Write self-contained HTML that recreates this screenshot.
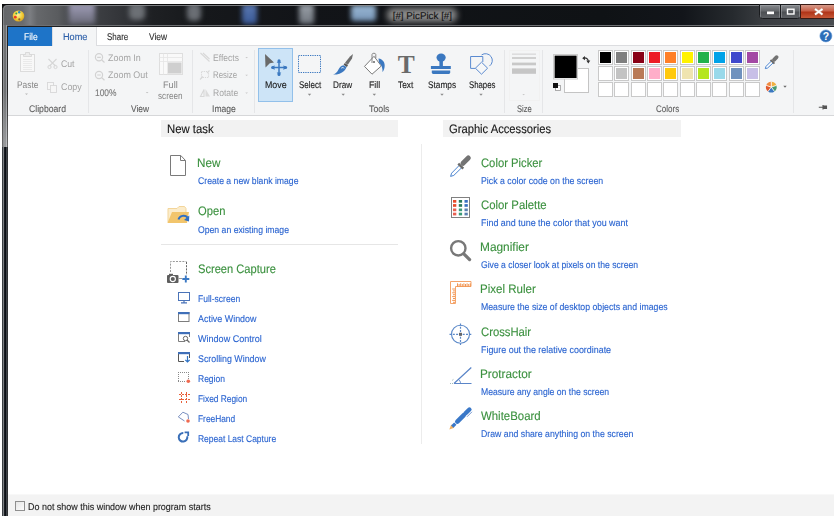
<!DOCTYPE html>
<html><head><meta charset="utf-8">
<style>
*{margin:0;padding:0;box-sizing:border-box}
html,body{width:834px;height:516px;overflow:hidden;background:#fff;font-family:"Liberation Sans",sans-serif}
.a{position:absolute;white-space:nowrap}
#frame{position:absolute;left:2px;top:4px;width:840px;height:520px;background:#0e0f10}
#hl{position:absolute;left:3px;top:5px;width:840px;height:520px;border-radius:5px 0 0 0;border-left:1px solid #8a8c8f;border-top:1px solid #8a8c8f;opacity:.8}
#title{position:absolute;left:3px;top:5px;width:840px;height:20px;border-radius:4px 0 0 0;overflow:hidden;
 background:linear-gradient(90deg,#65676a 0px,#6a6c6f 20px,#7c7e82 27px,#66686b 34px,#5a5c5f 55px,#4c4e52 64px,#3c3e42 95px,#303236 125px,#1e2023 150px,#16181b 200px,#121418 300px,#0f1215 600px,#12151a 680px,#262a2e 730px,#3a3d41 760px,#4a4d51 834px)}
#title div{position:absolute;top:0;height:20px;filter:blur(2.5px)}
#tline{position:absolute;left:3px;top:4px;width:840px;height:1px;background:#0a0a0b}
#tbot{position:absolute;left:7px;top:25px;width:840px;height:1px;background:#6e7073}
#lframe{position:absolute;left:2px;top:147px;width:6px;height:380px;background:linear-gradient(90deg,#303438 0px,#50555a 1.5px,#14181e 2.6px,#0a0d12 3.4px,#14181e 4px,#555a5f 4.8px,#2a2b2c 5.6px,#222324 6px)}
#lframe2{position:absolute;left:2px;top:8px;width:6px;height:139px;background:linear-gradient(rgba(255,255,255,0) 0,rgba(255,255,255,0) 60%,rgba(255,255,255,.3) 100%),linear-gradient(90deg,#2a2a2a 0px,#2a2a2a 0.8px,#a0a2a5 1.5px,#6c6e70 2.6px,#6a6c6e 3.4px,#9a9ca0 4.5px,#252525 5.3px,#252525 6px)}
#client{position:absolute;left:8px;top:26px;width:830px;height:500px;background:#fff;border-top:1px solid #1e1f21}
.tabrow{position:absolute;left:8px;top:27px;width:826px;height:18px;background:#fff}
.ribbon{position:absolute;left:8px;top:45px;width:826px;height:71px;background:#f4f5f6;border-top:1px solid #dcdde0;border-bottom:1px solid #d6d7d9}
.sep{position:absolute;top:50px;width:1px;height:62px;background:#e1e2e4}
.rt{font-size:9px;color:#444}
.dim{color:#a8a8a8}
.glab{font-size:9px;color:#555}
.hdr{position:absolute;height:17px;background:#f2f2f2;font-size:11.3px;color:#1a1a1a;padding-left:6px;line-height:17px}
.big{font-size:11.4px;color:#2e8b2e}
.desc{font-size:8.7px;color:#2b6fd0}
.cap{font-size:8.7px;color:#2b6fd0}
#bottom{position:absolute;left:8px;top:494px;width:826px;height:22px;background:linear-gradient(#f8f8f8 0,#f8f8f8 1px,#f3f3f3 1px)}
</style></head><body>
<div id="frame"></div>
<div id="lframe"></div>
<div id="lframe2"></div>
<div id="title">
<div style="left:66px;width:26px;top:-2px;height:21px;background:linear-gradient(#a29fba,#7a7a8c 70%,#6a6a78)"></div>
<div style="left:126px;width:16px;top:-2px;height:17px;border-radius:5px;background:#6c7075"></div>
<div style="left:184px;width:14px;top:-2px;height:18px;border-radius:5px;background:#6a6e74"></div>
<div style="left:239px;width:15px;top:-1px;height:20px;border-radius:3px;background:linear-gradient(#5a78b0,#3a5a98)"></div>
<div style="left:296px;width:15px;top:-1px;height:20px;border-radius:3px;background:linear-gradient(#9aa0a8,#70767e)"></div>
<div style="left:348px;width:25px;top:0px;height:16px;border-radius:3px;background:linear-gradient(#9ab8d4,#7896b8)"></div>
<div style="left:384px;width:70px;top:3px;height:14px;border-radius:6px;background:#8a8a8a;filter:blur(3px)"></div>
</div>
<div id="tline"></div>
<div id="hl"></div>
<div id="tbot"></div>
<div class="a" style="left:8px;top:5px;width:830px;height:1px;background:rgba(140,142,146,.35)"></div>
<div id="client"></div>

<svg class="a" style="left:0;top:0" width="834" height="30" viewBox="0 0 834 30">
<defs><radialGradient id="pal" cx="0.45" cy="0.4" r="0.6"><stop offset="0" stop-color="#fff3a0"/><stop offset="0.6" stop-color="#f2cf3a"/><stop offset="1" stop-color="#d9a520"/></radialGradient>
<linearGradient id="btn" x1="0" y1="0" x2="0" y2="1"><stop offset="0" stop-color="#8a8d91"/><stop offset="0.45" stop-color="#64676b"/><stop offset="0.55" stop-color="#4c4f53"/><stop offset="1" stop-color="#5e6165"/></linearGradient>
<linearGradient id="cls" x1="0" y1="0" x2="0" y2="1"><stop offset="0" stop-color="#d8a090"/><stop offset="0.45" stop-color="#c86048"/><stop offset="0.55" stop-color="#b03418"/><stop offset="1" stop-color="#c85a38"/></linearGradient></defs>
<ellipse cx="18.5" cy="16" rx="5.8" ry="5.6" fill="url(#pal)"/>
<circle cx="15.3" cy="17.2" r="1.4" fill="#e83a2a"/>
<circle cx="16.3" cy="13.4" r="1" fill="#3aa040"/>
<circle cx="19.2" cy="12.2" r="1.2" fill="#2a8ac0"/>
<circle cx="19.3" cy="19.3" r="1.1" fill="#8a6030"/>
<path d="M759.5,4.5H800.5V15.5Q800.5,18.5 797.5,18.5H762.5Q759.5,18.5 759.5,15.5Z" fill="url(#btn)" stroke="#1a1c1f" stroke-width="1"/>
<path d="M780.5,4.5V18.5" stroke="#1a1c1f" stroke-width="1"/>
<path d="M760.5,17.5V5.5H779.5V17.5M781.5,17.5V5.5H799.5V17.5" stroke="#b0b3b8" stroke-width="0.8" fill="none" opacity="0.55"/>
<path d="M800.5,4.5H840V18.5H800.5Z" fill="url(#cls)" stroke="#3a1a14" stroke-width="1"/>
<rect x="767" y="11.5" width="7" height="2.7" fill="#fff"/>
<rect x="787.5" y="9.2" width="6.5" height="4.8" fill="none" stroke="#fff" stroke-width="1.4"/>
<path d="M815,9L822.5,14.5M822.5,9L815,14.5" stroke="#bfe8e0" stroke-width="3" opacity=".35"/><path d="M815,9L822.5,14.5M822.5,9L815,14.5" stroke="#fff" stroke-width="1.7"/>
</svg>

<div class="tabrow"></div>


<div class="ribbon"></div>
<div class="a" style="left:8px;top:27px;width:44px;height:19px;background:#1e74c8"></div>
<div class="a" style="left:52px;top:27px;width:45px;height:19px;background:#f4f5f6;border-left:1px solid #dcdde0;border-right:1px solid #dcdde0"></div>
<div id="ribbon">
<div class="a" style="left:88px;top:50px;width:1px;height:63px;background:#e5e6e8"></div>
<div class="a" style="left:192px;top:50px;width:1px;height:63px;background:#e5e6e8"></div>
<div class="a" style="left:254px;top:50px;width:1px;height:63px;background:#e5e6e8"></div>
<div class="a" style="left:504px;top:50px;width:1px;height:63px;background:#e5e6e8"></div>
<div class="a" style="left:542px;top:50px;width:1px;height:63px;background:#e5e6e8"></div>
<div class="a" style="left:793px;top:50px;width:1px;height:63px;background:#e5e6e8"></div>
<div class="a" style="left:258px;top:48px;width:35px;height:54px;background:#cde4f7;border:1px solid #92c0ea"></div>
<div class="a" style="left:598px;top:50px;width:15px;height:15px;border:1px solid #c9c9c9;background:#fff"><div style="margin:1px;width:11px;height:11px;background:#000000"></div></div>
<div class="a" style="left:614px;top:50px;width:15px;height:15px;border:1px solid #c9c9c9;background:#fff"><div style="margin:1px;width:11px;height:11px;background:#7f7f7f"></div></div>
<div class="a" style="left:631px;top:50px;width:15px;height:15px;border:1px solid #c9c9c9;background:#fff"><div style="margin:1px;width:11px;height:11px;background:#880015"></div></div>
<div class="a" style="left:647px;top:50px;width:15px;height:15px;border:1px solid #c9c9c9;background:#fff"><div style="margin:1px;width:11px;height:11px;background:#ed1c24"></div></div>
<div class="a" style="left:663px;top:50px;width:15px;height:15px;border:1px solid #c9c9c9;background:#fff"><div style="margin:1px;width:11px;height:11px;background:#ff7f27"></div></div>
<div class="a" style="left:680px;top:50px;width:15px;height:15px;border:1px solid #c9c9c9;background:#fff"><div style="margin:1px;width:11px;height:11px;background:#fff200"></div></div>
<div class="a" style="left:696px;top:50px;width:15px;height:15px;border:1px solid #c9c9c9;background:#fff"><div style="margin:1px;width:11px;height:11px;background:#22b14c"></div></div>
<div class="a" style="left:712px;top:50px;width:15px;height:15px;border:1px solid #c9c9c9;background:#fff"><div style="margin:1px;width:11px;height:11px;background:#00a2e8"></div></div>
<div class="a" style="left:729px;top:50px;width:15px;height:15px;border:1px solid #c9c9c9;background:#fff"><div style="margin:1px;width:11px;height:11px;background:#3f48cc"></div></div>
<div class="a" style="left:745px;top:50px;width:15px;height:15px;border:1px solid #c9c9c9;background:#fff"><div style="margin:1px;width:11px;height:11px;background:#a349a4"></div></div>
<div class="a" style="left:598px;top:66px;width:15px;height:15px;border:1px solid #c9c9c9;background:#fff"><div style="margin:1px;width:11px;height:11px;background:#ffffff"></div></div>
<div class="a" style="left:614px;top:66px;width:15px;height:15px;border:1px solid #c9c9c9;background:#fff"><div style="margin:1px;width:11px;height:11px;background:#c3c3c3"></div></div>
<div class="a" style="left:631px;top:66px;width:15px;height:15px;border:1px solid #c9c9c9;background:#fff"><div style="margin:1px;width:11px;height:11px;background:#b97a57"></div></div>
<div class="a" style="left:647px;top:66px;width:15px;height:15px;border:1px solid #c9c9c9;background:#fff"><div style="margin:1px;width:11px;height:11px;background:#ffaec9"></div></div>
<div class="a" style="left:663px;top:66px;width:15px;height:15px;border:1px solid #c9c9c9;background:#fff"><div style="margin:1px;width:11px;height:11px;background:#ffc90e"></div></div>
<div class="a" style="left:680px;top:66px;width:15px;height:15px;border:1px solid #c9c9c9;background:#fff"><div style="margin:1px;width:11px;height:11px;background:#efe4b0"></div></div>
<div class="a" style="left:696px;top:66px;width:15px;height:15px;border:1px solid #c9c9c9;background:#fff"><div style="margin:1px;width:11px;height:11px;background:#b5e61d"></div></div>
<div class="a" style="left:712px;top:66px;width:15px;height:15px;border:1px solid #c9c9c9;background:#fff"><div style="margin:1px;width:11px;height:11px;background:#99d9ea"></div></div>
<div class="a" style="left:729px;top:66px;width:15px;height:15px;border:1px solid #c9c9c9;background:#fff"><div style="margin:1px;width:11px;height:11px;background:#7092be"></div></div>
<div class="a" style="left:745px;top:66px;width:15px;height:15px;border:1px solid #c9c9c9;background:#fff"><div style="margin:1px;width:11px;height:11px;background:#c8bfe7"></div></div>
<div class="a" style="left:598px;top:82px;width:15px;height:15px;border:1px solid #c9c9c9;background:#fff"><div style="margin:1px;width:11px;height:11px;background:#ffffff"></div></div>
<div class="a" style="left:614px;top:82px;width:15px;height:15px;border:1px solid #c9c9c9;background:#fff"><div style="margin:1px;width:11px;height:11px;background:#ffffff"></div></div>
<div class="a" style="left:631px;top:82px;width:15px;height:15px;border:1px solid #c9c9c9;background:#fff"><div style="margin:1px;width:11px;height:11px;background:#ffffff"></div></div>
<div class="a" style="left:647px;top:82px;width:15px;height:15px;border:1px solid #c9c9c9;background:#fff"><div style="margin:1px;width:11px;height:11px;background:#ffffff"></div></div>
<div class="a" style="left:663px;top:82px;width:15px;height:15px;border:1px solid #c9c9c9;background:#fff"><div style="margin:1px;width:11px;height:11px;background:#ffffff"></div></div>
<div class="a" style="left:680px;top:82px;width:15px;height:15px;border:1px solid #c9c9c9;background:#fff"><div style="margin:1px;width:11px;height:11px;background:#ffffff"></div></div>
<div class="a" style="left:696px;top:82px;width:15px;height:15px;border:1px solid #c9c9c9;background:#fff"><div style="margin:1px;width:11px;height:11px;background:#ffffff"></div></div>
<div class="a" style="left:712px;top:82px;width:15px;height:15px;border:1px solid #c9c9c9;background:#fff"><div style="margin:1px;width:11px;height:11px;background:#ffffff"></div></div>
<div class="a" style="left:729px;top:82px;width:15px;height:15px;border:1px solid #c9c9c9;background:#fff"><div style="margin:1px;width:11px;height:11px;background:#ffffff"></div></div>
<div class="a" style="left:745px;top:82px;width:15px;height:15px;border:1px solid #c9c9c9;background:#fff"><div style="margin:1px;width:11px;height:11px;background:#ffffff"></div></div>
<svg class="a" style="left:0;top:0" width="834" height="516" viewBox="0 0 834 516">
<!-- Paste -->
<rect x="20.5" y="54.5" width="14" height="17" fill="#f8f8f8" stroke="#dcdcdc"/>
<path d="M23.5,56.5V54.5H25.5V52.5H29.5V54.5H31.5V56.5Z" fill="#ececec" stroke="#d4d4d4" stroke-width="0.8"/>
<path d="M23,59.5H32M23,61.5H32M23,63.5H32M23,65.5H32M23,67.5H32M23,69.5H32" stroke="#e6e6e6" stroke-width="0.8"/>
<path d="M25,93.5H28L26.5,95Z" fill="#b8b8b8"/>
<!-- Cut -->
<path d="M48.5,59L55.5,66M56.5,59L49.5,66" stroke="#d6d6d6" stroke-width="1.1"/>
<circle cx="49.5" cy="67" r="1.6" fill="none" stroke="#d6d6d6"/><circle cx="55.5" cy="67" r="1.6" fill="none" stroke="#d6d6d6"/>
<!-- Copy -->
<rect x="47.5" y="82.5" width="6" height="7" fill="#f6f6f6" stroke="#d8d8d8" stroke-width="0.9"/>
<rect x="50.5" y="85.5" width="6" height="7" fill="#f6f6f6" stroke="#d8d8d8" stroke-width="0.9"/>
<!-- Zoom in/out -->
<g fill="none" stroke="#d2d2d2" stroke-width="1.2">
<circle cx="99" cy="57.3" r="3.6"/><path d="M101.8,60L104.5,62.5M97.2,57.3H100.8"/>
<circle cx="99" cy="75" r="3.6"/><path d="M101.8,77.7L104.5,80.2M97.2,75H100.8"/>
</g>
<path d="M145.8,92H148.5L147.1,93.3Z" fill="#c0c0c0"/>
<!-- Full screen -->
<rect x="159.5" y="53.5" width="23" height="21" fill="#f9f9f9" stroke="#dedede"/>
<path d="M159.5,57.5H182.5M159.5,61.5H182.5M163.5,53.5V74.5M167.5,53.5V74.5" stroke="#e4e4e4" stroke-width="0.8"/>
<rect x="168" y="62.5" width="13.5" height="11" fill="#cfcfcf"/>
<!-- Effects/Resize/Rotate -->
<g stroke="#d8d8d8" stroke-width="1.1" fill="none">
<path d="M200.5,53L209.5,61.5M203,53L209.5,59"/>
<rect x="201.5" y="71.5" width="7" height="6" stroke-dasharray="1.2,1"/><path d="M200,79.5L203,76.5M209.5,70.5L207,73"/>
<path d="M200.5,96.5H204V89.5Z" fill="none"/><path d="M205.5,89V96.5H210Z" fill="#dcdcdc" stroke="none"/>
</g>
<g fill="#c8c8c8"><path d="M245.3,57H248L246.6,58.3Z"/><path d="M245.3,74.8H248L246.6,76.1Z"/><path d="M245.3,92.5H248L246.6,93.8Z"/></g>
<!-- Move -->
<path d="M265,54L274,62.5L269.8,63.2L265.5,67.5Z" fill="#6a6a6a"/>
<path d="M272.5,67.6H285.5M279,61V74.2" stroke="#3b78c0" stroke-width="1.5"/>
<circle cx="272.6" cy="67.6" r="1.5" fill="#3b78c0"/><circle cx="285.6" cy="67.6" r="1.5" fill="#3b78c0"/>
<circle cx="279" cy="60.8" r="1.5" fill="#3b78c0"/><circle cx="279" cy="74.4" r="1.5" fill="#3b78c0"/>
<path d="M271.5,67.6L274.5,65.3V69.9Z M286.5,67.6L283.5,65.3V69.9Z M279,59.8L276.7,62.8H281.3Z M279,75.4L276.7,72.4H281.3Z" fill="#3b78c0"/>
<!-- Select -->
<rect x="298.5" y="55.5" width="22" height="17" fill="none" stroke="#3b78c0" stroke-width="1" stroke-dasharray="1.3,1"/>
<!-- Draw -->
<path d="M353,54L352,58.5L347.8,64.8L345,62.8L350,56.5Z" fill="#6e6e6e"/>
<path d="M344.8,63L348,65.2L346.8,67L343.6,64.8Z" fill="#555"/>
<path d="M343.5,65.2C341,65.5 339.5,67.5 338.2,70C337,72.5 335,74 333,74.6C337,74.8 341.5,73.5 344,71C345.7,69.2 346.5,67.6 346.5,67Z" fill="#3b78c0"/>
<path d="M341.3,68.2C342,67.4 343.5,67.3 344,68.3" stroke="#fff" stroke-width="0.9" fill="none"/>
<!-- Fill -->
<path d="M374,56.3L381.3,66L372,74.2L364.5,66.4Z" fill="#fff" stroke="#7a7a7a" stroke-width="1"/>
<path d="M372,63V54.5C372,52.8 375.8,52.8 375.8,54.5V58" stroke="#7a7a7a" stroke-width="0.9" fill="none"/>
<circle cx="374" cy="62" r="1" fill="#666"/>
<path d="M378.5,58.5C383,59 385.5,63 384.5,67.5C384,70 383,71.5 382.5,72C382.8,69 381.8,65 379,62.5Z" fill="#3b78c0"/>
<!-- Text T -->
<text x="406.2" y="72.9" text-anchor="middle" font-family="Liberation Serif" font-weight="bold" font-size="25.5" fill="#6a6a6a">T</text>
<!-- Stamps -->
<ellipse cx="441.1" cy="57.6" rx="4.6" ry="4.1" fill="#3b78c0"/>
<rect x="439.4" y="60" width="3.5" height="6.5" fill="#3b78c0"/>
<rect x="430.9" y="66" width="19.9" height="3" fill="#3b78c0"/>
<path d="M431.8,70.4H450.2V72.6Q450.2,74 448.8,74H433.2Q431.8,74 431.8,72.6Z" fill="#3b78c0"/>
<!-- Shapes -->
<path d="M482.8,62V56.5H470.6V68.4H475.5" fill="none" stroke="#5a8ad0" stroke-width="1"/>
<path d="M481.6,54.9A6.8,6.8 0 0 1 489.4,66.1" fill="none" stroke="#5a8ad0" stroke-width="1"/>
<path d="M481.5,62.2L487.6,68.2L481.5,74.2L475.4,68.2Z" fill="#f6f7f8" stroke="#5a8ad0" stroke-width="1"/>
<!-- dropdown arrows -->
<g fill="#8a8a8a">
<path d="M307.8,93.7H311.2L309.5,95.7Z"/><path d="M341.5,93.7H344.9L343.2,95.7Z"/><path d="M372.6,93.7H376L374.3,95.7Z"/>
<path d="M440.3,93.7H443.7L442,95.7Z"/><path d="M479.3,93.7H482.7L481,95.7Z"/>
</g>
<path d="M522.3,94H525L523.6,95.2Z" fill="#c8c8c8"/>
<!-- Size -->
<rect x="509.5" y="50.5" width="30" height="50" fill="none" stroke="#efefef" stroke-width="1" opacity=".6"/>
<rect x="512" y="53.5" width="24" height="1.3" fill="#d8d8d8"/>
<rect x="512" y="57.1" width="24" height="1.8" fill="#cdcdcd"/>
<rect x="512" y="62.6" width="24" height="2.7" fill="#c8c8c8"/>
<rect x="512" y="68.4" width="24" height="5.4" fill="#c6c6c6"/>
<!-- Colors -->
<rect x="564.5" y="68.5" width="24" height="24" fill="#fff" stroke="#c4c4c4"/>
<rect x="553.5" y="54.5" width="24" height="24.5" fill="#fff" stroke="#cdcdcd"/>
<rect x="554.6" y="55.6" width="22" height="22.4" fill="#000"/>
<path d="M583.5,58C586.5,57.5 588.5,59.2 588.3,61.8" fill="none" stroke="#333" stroke-width="1.1"/>
<path d="M582.2,58.2L585,56V60.2Z M588.3,63.4L586.3,60.6H590.3Z" fill="#333"/>
<rect x="555.5" y="85.5" width="5" height="5" fill="#fff" stroke="#999" stroke-width="0.8"/>
<rect x="553" y="83" width="5" height="5" fill="#111"/>
<!-- eyedropper -->
<path d="M765.3,68.6L766,66.4L771.6,60.8L773.4,62.6L767.6,68Z" fill="#fff" stroke="#4a84d0" stroke-width="1"/>
<path d="M770.6,59.8L774.4,63.6" stroke="#6a6a6a" stroke-width="1.9"/>
<path d="M774,59.8L776.6,57.2" stroke="#737373" stroke-width="3.8" stroke-linecap="round"/>
<!-- color wheel -->
<g transform="translate(771.3,87.1)">
<path d="M0,0L0,-5.4A5.4,5.4 0 0 1 5.1,-1.7Z" fill="#f0b040"/>
<path d="M0,0L5.1,-1.7A5.4,5.4 0 0 1 3.2,4.3Z" fill="#4a9a70"/>
<path d="M0,0L3.2,4.3A5.4,5.4 0 0 1 -3.2,4.3Z" fill="#3a78c0"/>
<path d="M0,0L-3.2,4.3A5.4,5.4 0 0 1 -5.1,-1.7Z" fill="#e05a30"/>
<path d="M0,0L-5.1,-1.7A5.4,5.4 0 0 1 0,-5.4Z" fill="#f08a40"/>
<path d="M0,0V-5.4M0,0L5.1,-1.7M0,0L3.2,4.3M0,0L-3.2,4.3M0,0L-5.1,-1.7" stroke="#fff" stroke-width="0.8"/>
</g>
<path d="M783.3,85.8H786.7L785,87.8Z" fill="#666"/>
<!-- pin -->
<path d="M818.8,107.3H823M823,105V109.5M823,106H826.5V108.5H823" stroke="#555" stroke-width="1.1" fill="#555"/>
<!-- help -->
<circle cx="825.9" cy="35.9" r="6" fill="#2c6db8"/>
<circle cx="825.9" cy="35.9" r="6" fill="none" stroke="#5a90d0" stroke-width="0.6"/>
<text x="826" y="40" text-anchor="middle" font-family="Liberation Sans" font-weight="bold" font-size="10.5" fill="#fff">?</text>
</svg>

</div>

<div id="content">
<svg class="a" style="left:0;top:0" width="834" height="516" viewBox="0 0 834 516">
<!-- New doc -->
<path d="M170.5,155.5H180.8L185.5,160.5V175.5H170.5Z" fill="#fff" stroke="#7a7a7a" stroke-width="1"/>
<path d="M180.5,155.5V160.5H185.5" fill="none" stroke="#7a7a7a" stroke-width="1"/>
<!-- Open folder -->
<path d="M168,208.5H177L179,206.5H184.5L186,208.5V222.5H168Z" fill="#fbeccb" stroke="#f3d59a" stroke-width="1"/>
<path d="M172,212H189L187,223H167.5Z" fill="#f2c56c"/>
<path d="M178.5,219.5C179.5,215.5 185,214.5 187.5,217.5" fill="none" stroke="#2f6fc4" stroke-width="2"/>
<path d="M189.3,215.5L189,221.5L184,220Z" fill="#2f6fc4"/>
<!-- Screen capture -->
<path d="M170.5,272V261.5H186.5" fill="none" stroke="#9a9a9a" stroke-width="1" stroke-dasharray="2,1.2"/><path d="M186.5,262V275" fill="none" stroke="#666" stroke-width="1" stroke-dasharray="2,1.2"/>
<rect x="167" y="275" width="11.5" height="8" rx="1" fill="#5e5e5e"/>
<rect x="169" y="273.8" width="4" height="2" fill="#5e5e5e"/>
<circle cx="172.8" cy="279" r="2.6" fill="none" stroke="#fff" stroke-width="1.1"/>
<path d="M178.5,278.5H182" stroke="#999" stroke-width="1"/>
<path d="M185.8,275.5V282.5M182.3,279H189.3" stroke="#3a78c4" stroke-width="1.9"/>
<!-- list icons -->
<g stroke-width="1" fill="none">
<rect x="178.5" y="292.5" width="11" height="8" stroke="#4a73b8"/>
<path d="M184,300.5V302.5M181,302.8H187" stroke="#4a73b8" stroke-width="1.2"/>
<rect x="178.5" y="312.5" width="10.5" height="9" stroke="#7d7d7d"/>
<rect x="178" y="312" width="11.5" height="2.2" fill="#3f6fb8" stroke="none"/>
<path d="M178.5,332.5V341.5H185M189.5,337V332.5" stroke="#7d7d7d"/>
<rect x="178" y="332" width="12" height="2.2" fill="#3f6fb8" stroke="none"/>
<circle cx="185.5" cy="338.5" r="2.2" stroke="#666"/>
<path d="M187,340L189.5,342.5" stroke="#666" stroke-width="1.3"/>
<path d="M178.5,352.5V361.5H184M189.5,358V352.5" stroke="#555"/>
<rect x="178" y="352" width="12" height="2.2" fill="#3f6fb8" stroke="none"/>
<path d="M187.5,356V362M185.3,359.8L187.5,362L189.7,359.8" stroke="#2f72c4" stroke-width="1.2"/>
<g shape-rendering="crispEdges">
<path d="M178,372.5H189M178,381.5H186M178.5,372V382M188.5,372V379" stroke="#8a8a8a" stroke-dasharray="1,1"/>
</g>
<circle cx="188.3" cy="381.3" r="1.8" fill="#f06a50" stroke="none"/>
<g shape-rendering="crispEdges">
<path d="M181.5,392V403M186.5,392V403M179,394.5H190M179,399.5H190" stroke="#e8603a" stroke-dasharray="2,1"/>
</g>
<path d="M178.3,416.9L182.9,412.2L188,414.5L188.5,419M184.5,421L178.3,416.9" stroke="#7a90c0" stroke-width="1" fill="none"/>
<circle cx="188" cy="421" r="1.8" fill="#f06a50" stroke="none"/>
<path d="M183.3,433A4.3,4.3 0 1 0 187.2,436.2" stroke="#3a6fb8" stroke-width="2" fill="none"/>
<path d="M184.6,432.4H188.2V436" stroke="#3a6fb8" stroke-width="1.8" fill="none"/>
</g>
<!-- Color picker -->
<path d="M450.6,176.4L451.6,173.2L459.6,165L462,167.4L453.8,175.4Z" fill="#fff" stroke="#4a84d0" stroke-width="1"/>
<path d="M458.3,163.7L463.3,168.7" stroke="#6a6a6a" stroke-width="2.4"/>
<path d="M463,163.3L468.3,158" stroke="#737373" stroke-width="5" stroke-linecap="round"/>
<!-- Color palette -->
<rect x="451.5" y="197.5" width="18" height="20" fill="#fff" stroke="#808080"/>
<rect x="453" y="200" width="3.3" height="2.7" fill="#e84a2a"/><rect x="453" y="204.1" width="3.3" height="2.7" fill="#e84a2a"/><rect x="453" y="208.5" width="3.3" height="2.7" fill="#e86050"/><rect x="453" y="212.7" width="3.3" height="2.7" fill="#e86050"/><rect x="458.8" y="200" width="3.3" height="2.7" fill="#2a7a5a"/><rect x="458.8" y="204.1" width="3.3" height="2.7" fill="#2a7a5a"/><rect x="458.8" y="208.5" width="3.3" height="2.7" fill="#3a9a78"/><rect x="458.8" y="212.7" width="3.3" height="2.7" fill="#3a9a78"/><rect x="464.5" y="200" width="3.3" height="2.7" fill="#3a70c0"/><rect x="464.5" y="204.1" width="3.3" height="2.7" fill="#3a70c0"/><rect x="464.5" y="208.5" width="3.3" height="2.7" fill="#5a80b0"/><rect x="464.5" y="212.7" width="3.3" height="2.7" fill="#5a80b0"/>
<!-- Magnifier -->
<circle cx="458.3" cy="248.3" r="7.2" fill="none" stroke="#787878" stroke-width="2.4"/>
<path d="M463.8,253.8L469.6,259.6" stroke="#787878" stroke-width="3.2" stroke-linecap="round"/>
<!-- Pixel ruler -->
<path d="M450.5,303.5V281.5H471M455.5,303.5V286.5H471M450.5,303.5H455.5M471,281.5V286.5" fill="none" stroke="#f4a46a" stroke-width="1"/>
<path d="M457.5,286.5V283.3M459.1,286.5V284M460.7,286.5V283.3M462.3,286.5V284M463.9,286.5V283.3M465.5,286.5V284M467.1,286.5V283.3M468.7,286.5V284M470.3,286.5V283.3M455,289.0H452.2M455,290.9H453M455,292.8H452.2M455,294.7H453M455,296.6H452.2M455,298.5H453M455,300.4H452.2M455,302.3H453" stroke="#f08a40" stroke-width="0.9"/>
<!-- Crosshair -->
<circle cx="460.5" cy="334.3" r="9" fill="none" stroke="#5a88c8" stroke-width="1.1"/>
<path d="M460.5,323.5V345M449.5,334.3H471.5" stroke="#5a88c8" stroke-width="1.2" stroke-dasharray="2,1.3"/>
<rect x="459" y="332.8" width="3" height="3" fill="#666"/>
<!-- Protractor -->
<path d="M454,383.5H471.5M454,383.5L471.3,367.5" stroke="#5a85c8" stroke-width="1.2" fill="none"/>
<path d="M458.5,379.5C460,380.5 460.5,382 460.5,383.5" stroke="#5a85c8" stroke-width="1" fill="none"/>
<path d="M450,383.5H453M452,380.5L454,379" stroke="#8aa" stroke-width="0.8" stroke-dasharray="1,1"/>
<!-- Whiteboard pen -->
<path d="M449.3,429.6L451.2,424.6L454.3,427.7Z" fill="#f0b060"/>
<path d="M452.3,426.6L455.3,423.6" stroke="#3a78c8" stroke-width="3.4"/>
<path d="M457.3,421.6L463.6,415.3" stroke="#3a78c8" stroke-width="4.6" stroke-linecap="round"/>
<path d="M465.6,413.3L469.4,409.5" stroke="#3a78c8" stroke-width="4.4" stroke-linecap="round"/>
<path d="M467,416.8L472,411.8" stroke="#7a9ad0" stroke-width="1"/>
</svg>

<div class="a" style="left:161px;top:120px;width:237px;height:17px;background:#f2f2f2"></div>
<div class="a" style="left:443px;top:120px;width:238px;height:17px;background:#f2f2f2"></div>
<div class="a" style="left:161px;top:244px;width:237px;height:1px;background:#e6e6e6"></div>
<div class="a" style="left:421px;top:144px;width:1px;height:300px;background:#ececec"></div>
</div>

<div id="bottom"></div>
<div class="a" style="left:15px;top:501px;width:10px;height:10px;border:1px solid #8f8f8f;background:linear-gradient(135deg,#e6e6e6,#fdfdfd)"></div>
<div id="texts">
<div class="a" style="left:392.70px;top:12.03px;font-size:9.8px;line-height:1;text-rendering:geometricPrecision;transform:scaleX(1.0000);transform-origin:0 0;-webkit-text-stroke:0.12px #141414;color:#141414">[#] PicPick [#]</div>
<div class="a" style="left:23.50px;top:32.93px;font-size:9.8px;line-height:1;text-rendering:geometricPrecision;transform:scaleX(0.8625);transform-origin:0 0;-webkit-text-stroke:0.12px #ffffff;color:#ffffff">File</div>
<div class="a" style="left:62.80px;top:32.93px;font-size:9.8px;line-height:1;text-rendering:geometricPrecision;transform:scaleX(0.9346);transform-origin:0 0;-webkit-text-stroke:0.12px #2b5ea8;color:#2b5ea8">Home</div>
<div class="a" style="left:106.90px;top:32.93px;font-size:9.8px;line-height:1;text-rendering:geometricPrecision;transform:scaleX(0.8115);transform-origin:0 0;-webkit-text-stroke:0.12px #2e2e2e;color:#2e2e2e">Share</div>
<div class="a" style="left:148.50px;top:32.93px;font-size:9.8px;line-height:1;text-rendering:geometricPrecision;transform:scaleX(0.8619);transform-origin:0 0;-webkit-text-stroke:0.12px #2e2e2e;color:#2e2e2e">View</div>
<div class="a" style="left:16.80px;top:81.25px;font-size:9.6px;line-height:1;text-rendering:geometricPrecision;transform:scaleX(0.8708);transform-origin:0 0;-webkit-text-stroke:0px #858585;color:#858585">Paste</div>
<div class="a" style="left:60.80px;top:59.75px;font-size:9.6px;line-height:1;text-rendering:geometricPrecision;transform:scaleX(0.9067);transform-origin:0 0;-webkit-text-stroke:0px #a4a4a4;color:#a4a4a4">Cut</div>
<div class="a" style="left:60.80px;top:83.35px;font-size:9.6px;line-height:1;text-rendering:geometricPrecision;transform:scaleX(0.9273);transform-origin:0 0;-webkit-text-stroke:0px #a4a4a4;color:#a4a4a4">Copy</div>
<div class="a" style="left:29.00px;top:105.15px;font-size:9.6px;line-height:1;text-rendering:geometricPrecision;transform:scaleX(0.9024);transform-origin:0 0;-webkit-text-stroke:0.12px #5e5e5e;color:#5e5e5e">Clipboard</div>
<div class="a" style="left:108.40px;top:53.55px;font-size:9.6px;line-height:1;text-rendering:geometricPrecision;transform:scaleX(0.9314);transform-origin:0 0;-webkit-text-stroke:0px #a4a4a4;color:#a4a4a4">Zoom In</div>
<div class="a" style="left:108.40px;top:71.25px;font-size:9.6px;line-height:1;text-rendering:geometricPrecision;transform:scaleX(0.9302);transform-origin:0 0;-webkit-text-stroke:0px #a4a4a4;color:#a4a4a4">Zoom Out</div>
<div class="a" style="left:94.62px;top:88.85px;font-size:9.6px;line-height:1;text-rendering:geometricPrecision;transform:scaleX(0.8750);transform-origin:0 0;-webkit-text-stroke:0.12px #7a7a7a;color:#7a7a7a">100%</div>
<div class="a" style="left:163.30px;top:80.75px;font-size:9.6px;line-height:1;text-rendering:geometricPrecision;transform:scaleX(0.9533);transform-origin:0 0;-webkit-text-stroke:0px #858585;color:#858585">Full</div>
<div class="a" style="left:158.30px;top:91.55px;font-size:9.6px;line-height:1;text-rendering:geometricPrecision;transform:scaleX(0.8517);transform-origin:0 0;-webkit-text-stroke:0px #858585;color:#858585">screen</div>
<div class="a" style="left:130.70px;top:105.15px;font-size:9.6px;line-height:1;text-rendering:geometricPrecision;transform:scaleX(0.8714);transform-origin:0 0;-webkit-text-stroke:0.12px #5e5e5e;color:#5e5e5e">View</div>
<div class="a" style="left:213.00px;top:53.55px;font-size:9.6px;line-height:1;text-rendering:geometricPrecision;transform:scaleX(0.8897);transform-origin:0 0;-webkit-text-stroke:0px #a4a4a4;color:#a4a4a4">Effects</div>
<div class="a" style="left:213.00px;top:71.25px;font-size:9.6px;line-height:1;text-rendering:geometricPrecision;transform:scaleX(0.8207);transform-origin:0 0;-webkit-text-stroke:0px #a4a4a4;color:#a4a4a4">Resize</div>
<div class="a" style="left:213.00px;top:88.85px;font-size:9.6px;line-height:1;text-rendering:geometricPrecision;transform:scaleX(0.8929);transform-origin:0 0;-webkit-text-stroke:0px #a4a4a4;color:#a4a4a4">Rotate</div>
<div class="a" style="left:211.51px;top:105.15px;font-size:9.6px;line-height:1;text-rendering:geometricPrecision;transform:scaleX(0.8920);transform-origin:0 0;-webkit-text-stroke:0.12px #5e5e5e;color:#5e5e5e">Image</div>
<div class="a" style="left:264.70px;top:81.05px;font-size:9.6px;line-height:1;text-rendering:geometricPrecision;transform:scaleX(0.9217);transform-origin:0 0;-webkit-text-stroke:0.12px #1c1c1c;color:#1c1c1c">Move</div>
<div class="a" style="left:298.80px;top:81.05px;font-size:9.6px;line-height:1;text-rendering:geometricPrecision;transform:scaleX(0.8296);transform-origin:0 0;-webkit-text-stroke:0.12px #1c1c1c;color:#1c1c1c">Select</div>
<div class="a" style="left:333.40px;top:81.05px;font-size:9.6px;line-height:1;text-rendering:geometricPrecision;transform:scaleX(0.8522);transform-origin:0 0;-webkit-text-stroke:0.12px #1c1c1c;color:#1c1c1c">Draw</div>
<div class="a" style="left:369.00px;top:81.05px;font-size:9.6px;line-height:1;text-rendering:geometricPrecision;transform:scaleX(0.9167);transform-origin:0 0;-webkit-text-stroke:0.12px #1c1c1c;color:#1c1c1c">Fill</div>
<div class="a" style="left:398.10px;top:81.05px;font-size:9.6px;line-height:1;text-rendering:geometricPrecision;transform:scaleX(0.8667);transform-origin:0 0;-webkit-text-stroke:0.12px #1c1c1c;color:#1c1c1c">Text</div>
<div class="a" style="left:427.50px;top:81.05px;font-size:9.6px;line-height:1;text-rendering:geometricPrecision;transform:scaleX(0.8636);transform-origin:0 0;-webkit-text-stroke:0.12px #1c1c1c;color:#1c1c1c">Stamps</div>
<div class="a" style="left:469.00px;top:81.05px;font-size:9.6px;line-height:1;text-rendering:geometricPrecision;transform:scaleX(0.8121);transform-origin:0 0;-webkit-text-stroke:0.12px #1c1c1c;color:#1c1c1c">Shapes</div>
<div class="a" style="left:369.30px;top:105.15px;font-size:9.6px;line-height:1;text-rendering:geometricPrecision;transform:scaleX(0.9136);transform-origin:0 0;-webkit-text-stroke:0.12px #5e5e5e;color:#5e5e5e">Tools</div>
<div class="a" style="left:517.00px;top:105.15px;font-size:9.6px;line-height:1;text-rendering:geometricPrecision;transform:scaleX(0.7889);transform-origin:0 0;-webkit-text-stroke:0.12px #5e5e5e;color:#5e5e5e">Size</div>
<div class="a" style="left:656.00px;top:105.15px;font-size:9.6px;line-height:1;text-rendering:geometricPrecision;transform:scaleX(0.8393);transform-origin:0 0;-webkit-text-stroke:0.12px #5e5e5e;color:#5e5e5e">Colors</div>
<div class="a" style="left:166.88px;top:122.90px;font-size:12.3px;line-height:1;text-rendering:geometricPrecision;transform:scaleX(0.9220);transform-origin:0 0;-webkit-text-stroke:0.12px #151515;color:#151515">New task</div>
<div class="a" style="left:449.00px;top:122.90px;font-size:12.3px;line-height:1;text-rendering:geometricPrecision;transform:scaleX(0.9107);transform-origin:0 0;-webkit-text-stroke:0.12px #151515;color:#151515">Graphic Accessories</div>
<div class="a" style="left:196.95px;top:156.50px;font-size:12.3px;line-height:1;text-rendering:geometricPrecision;transform:scaleX(0.9500);transform-origin:0 0;-webkit-text-stroke:0.12px #3a903e;color:#3a903e">New</div>
<div class="a" style="left:198.00px;top:176.85px;font-size:9.7px;line-height:1;text-rendering:geometricPrecision;transform:scaleX(0.8929);transform-origin:0 0;-webkit-text-stroke:0.12px #2a64d0;color:#2a64d0">Create a new blank image</div>
<div class="a" style="left:197.80px;top:205.10px;font-size:12.3px;line-height:1;text-rendering:geometricPrecision;transform:scaleX(0.9100);transform-origin:0 0;-webkit-text-stroke:0.12px #3a903e;color:#3a903e">Open</div>
<div class="a" style="left:198.00px;top:225.75px;font-size:9.7px;line-height:1;text-rendering:geometricPrecision;transform:scaleX(0.8941);transform-origin:0 0;-webkit-text-stroke:0.12px #2a64d0;color:#2a64d0">Open an existing image</div>
<div class="a" style="left:197.80px;top:262.80px;font-size:12.3px;line-height:1;text-rendering:geometricPrecision;transform:scaleX(0.9047);transform-origin:0 0;-webkit-text-stroke:0.12px #3a903e;color:#3a903e">Screen Capture</div>
<div class="a" style="left:197.90px;top:294.95px;font-size:9.7px;line-height:1;text-rendering:geometricPrecision;transform:scaleX(0.8792);transform-origin:0 0;-webkit-text-stroke:0.12px #2a64d0;color:#2a64d0">Full-screen</div>
<div class="a" style="left:197.90px;top:314.90px;font-size:9.7px;line-height:1;text-rendering:geometricPrecision;transform:scaleX(0.9203);transform-origin:0 0;-webkit-text-stroke:0.12px #2a64d0;color:#2a64d0">Active Window</div>
<div class="a" style="left:197.90px;top:334.85px;font-size:9.7px;line-height:1;text-rendering:geometricPrecision;transform:scaleX(0.9338);transform-origin:0 0;-webkit-text-stroke:0.12px #2a64d0;color:#2a64d0">Window Control</div>
<div class="a" style="left:197.90px;top:354.80px;font-size:9.7px;line-height:1;text-rendering:geometricPrecision;transform:scaleX(0.9120);transform-origin:0 0;-webkit-text-stroke:0.12px #2a64d0;color:#2a64d0">Scrolling Window</div>
<div class="a" style="left:197.90px;top:374.75px;font-size:9.7px;line-height:1;text-rendering:geometricPrecision;transform:scaleX(0.8767);transform-origin:0 0;-webkit-text-stroke:0.12px #2a64d0;color:#2a64d0">Region</div>
<div class="a" style="left:197.90px;top:394.70px;font-size:9.7px;line-height:1;text-rendering:geometricPrecision;transform:scaleX(0.8632);transform-origin:0 0;-webkit-text-stroke:0.12px #2a64d0;color:#2a64d0">Fixed Region</div>
<div class="a" style="left:197.90px;top:414.65px;font-size:9.7px;line-height:1;text-rendering:geometricPrecision;transform:scaleX(0.8628);transform-origin:0 0;-webkit-text-stroke:0.12px #2a64d0;color:#2a64d0">FreeHand</div>
<div class="a" style="left:197.90px;top:434.60px;font-size:9.7px;line-height:1;text-rendering:geometricPrecision;transform:scaleX(0.8742);transform-origin:0 0;-webkit-text-stroke:0.12px #2a64d0;color:#2a64d0">Repeat Last Capture</div>
<div class="a" style="left:480.60px;top:156.80px;font-size:12.3px;line-height:1;text-rendering:geometricPrecision;transform:scaleX(0.9149);transform-origin:0 0;-webkit-text-stroke:0.12px #3a903e;color:#3a903e">Color Picker</div>
<div class="a" style="left:480.60px;top:176.85px;font-size:9.7px;line-height:1;text-rendering:geometricPrecision;transform:scaleX(0.9037);transform-origin:0 0;-webkit-text-stroke:0.12px #2a64d0;color:#2a64d0">Pick a color code on the screen</div>
<div class="a" style="left:480.60px;top:199.03px;font-size:12.3px;line-height:1;text-rendering:geometricPrecision;transform:scaleX(0.9239);transform-origin:0 0;-webkit-text-stroke:0.12px #3a903e;color:#3a903e">Color Palette</div>
<div class="a" style="left:480.60px;top:219.05px;font-size:9.7px;line-height:1;text-rendering:geometricPrecision;transform:scaleX(0.9219);transform-origin:0 0;-webkit-text-stroke:0.12px #2a64d0;color:#2a64d0">Find and tune the color that you want</div>
<div class="a" style="left:480.03px;top:241.26px;font-size:12.3px;line-height:1;text-rendering:geometricPrecision;transform:scaleX(0.9660);transform-origin:0 0;-webkit-text-stroke:0.12px #3a903e;color:#3a903e">Magnifier</div>
<div class="a" style="left:480.60px;top:261.25px;font-size:9.7px;line-height:1;text-rendering:geometricPrecision;transform:scaleX(0.8892);transform-origin:0 0;-webkit-text-stroke:0.12px #2a64d0;color:#2a64d0">Give a closer look at pixels on the screen</div>
<div class="a" style="left:479.66px;top:283.49px;font-size:12.3px;line-height:1;text-rendering:geometricPrecision;transform:scaleX(0.9379);transform-origin:0 0;-webkit-text-stroke:0.12px #3a903e;color:#3a903e">Pixel Ruler</div>
<div class="a" style="left:480.60px;top:303.45px;font-size:9.7px;line-height:1;text-rendering:geometricPrecision;transform:scaleX(0.9000);transform-origin:0 0;-webkit-text-stroke:0.12px #2a64d0;color:#2a64d0">Measure the size of desktop objects and images</div>
<div class="a" style="left:480.60px;top:325.72px;font-size:12.3px;line-height:1;text-rendering:geometricPrecision;transform:scaleX(0.9164);transform-origin:0 0;-webkit-text-stroke:0.12px #3a903e;color:#3a903e">CrossHair</div>
<div class="a" style="left:480.60px;top:345.65px;font-size:9.7px;line-height:1;text-rendering:geometricPrecision;transform:scaleX(0.9184);transform-origin:0 0;-webkit-text-stroke:0.12px #2a64d0;color:#2a64d0">Figure out the relative coordinate</div>
<div class="a" style="left:479.64px;top:367.95px;font-size:12.3px;line-height:1;text-rendering:geometricPrecision;transform:scaleX(0.9585);transform-origin:0 0;-webkit-text-stroke:0.12px #3a903e;color:#3a903e">Protractor</div>
<div class="a" style="left:480.60px;top:387.85px;font-size:9.7px;line-height:1;text-rendering:geometricPrecision;transform:scaleX(0.8910);transform-origin:0 0;-webkit-text-stroke:0.12px #2a64d0;color:#2a64d0">Measure any angle on the screen</div>
<div class="a" style="left:480.60px;top:410.18px;font-size:12.3px;line-height:1;text-rendering:geometricPrecision;transform:scaleX(0.9281);transform-origin:0 0;-webkit-text-stroke:0.12px #3a903e;color:#3a903e">WhiteBoard</div>
<div class="a" style="left:480.60px;top:430.05px;font-size:9.7px;line-height:1;text-rendering:geometricPrecision;transform:scaleX(0.9012);transform-origin:0 0;-webkit-text-stroke:0.12px #2a64d0;color:#2a64d0">Draw and share anything on the screen</div>
<div class="a" style="left:28.00px;top:503.05px;font-size:9.7px;line-height:1;text-rendering:geometricPrecision;transform:scaleX(0.9242);transform-origin:0 0;-webkit-text-stroke:0.12px #1e1e1e;color:#1e1e1e">Do not show this window when program starts</div>
</div>
</body></html>
